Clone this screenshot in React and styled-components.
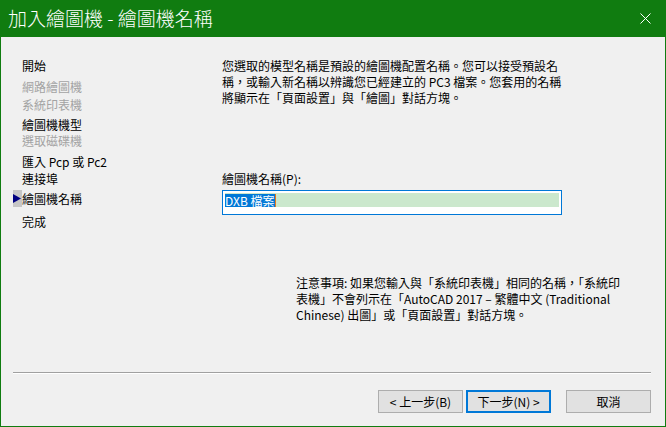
import styled, { createGlobalStyle } from 'styled-components'

const Global = createGlobalStyle`
  html, body {
    margin: 0;
    padding: 0;
    background: #f0f0f0;
  }
  * { box-sizing: border-box; }
`

const Window = styled.div`
  display: flex;
  flex-direction: column;
  inline-size: 666px;
  block-size: 427px;
  border: 1px solid #107c10;
  border-top: none;
  background: #f0f0f0;
  font-family: "Noto Sans CJK TC", "Noto Sans", sans-serif;
  font-size: 12px;
  color: #000;
`

const TitleBar = styled.div`
  display: flex;
  align-items: center;
  block-size: 37px;
  margin: 0 -1px;
  padding-left: 8px;
  background: #107c10;
  color: #fff;

  .title {
    flex: 1;
    font-size: 19px;
    line-height: 24px;
    font-weight: 300;
    padding-bottom: 2px;
  }
`

const CloseButton = styled.div`
  display: flex;
  align-items: center;
  justify-content: center;
  inline-size: 42px;
  block-size: 37px;
`

const Main = styled.div`
  display: flex;
  flex: 1;
  padding-top: 21px;
`

const Sidebar = styled.ul`
  list-style: none;
  margin: 0;
  padding: 0 0 0 21px;
  inline-size: 221px;
  display: flex;
  flex-direction: column;
`

const Step = styled.li`
  position: relative;
  line-height: 16px;
  margin-top: ${p => p.$gap || 0}px;
  color: ${p => (p.$disabled ? '#a3a3a3' : '#000')};
  white-space: nowrap;
`

const Marker = styled.span`
  position: absolute;
  left: -9px;
  top: -1px;
  inline-size: 9px;
  block-size: 17px;
  background: #c6c6c6;
  display: flex;
  align-items: center;
`

const Content = styled.div`
  display: flex;
  flex-direction: column;
  inline-size: 360px;
`

const Intro = styled.p`
  margin: 0;
  line-height: 16px;
  white-space: nowrap;
`

const FieldLabel = styled.label`
  display: block;
  margin-top: 65px;
  line-height: 16px;
`

const NameInput = styled.div`
  margin-top: 3px;
  inline-size: 340px;
  block-size: 25px;
  border: 1px solid #0078d7;
  background: #fff;
  padding: 2px 2px 0 2px;

  .row {
    display: flex;
    align-items: center;
    block-size: 14px;
    background: #cbe8cd;
  }

  .selected {
    background: #0078d7;
    color: #fff;
    line-height: 13px;
    padding-right: 1px;
    border-right: 1px solid #e87a1b;
  }
`

const Note = styled.p`
  margin: 60px 0 0 74px;
  line-height: 16px;
  white-space: nowrap;
`

const Footer = styled.div`
  display: flex;
  flex-direction: column;
  padding: 0 14px 13px 12px;
`

const Separator = styled.hr`
  margin: 0;
  border: none;
  border-top: 1px solid #a0a0a0;
  border-bottom: 1px solid #fff;
`

const ButtonRow = styled.div`
  display: flex;
  justify-content: flex-end;
  margin-top: 16px;
`

const Button = styled.button`
  inline-size: 85px;
  block-size: 23px;
  margin-left: ${p => p.$gap || 0}px;
  padding: 0;
  font: inherit;
  font-size: 12px;
  color: #000;
  background: #e1e1e1;
  border: ${p => (p.$default ? '2px solid #0078d7' : '1px solid #adadad')};
`

function Arrow() {
  return (
    <svg width="9" height="9" viewBox="0 0 9 9">
      <polygon points="0,0 8,4.5 0,9" fill="#000080" />
    </svg>
  )
}

const steps = [
  { text: '開始', gap: 0 },
  { text: '網路繪圖機', gap: 5, disabled: true },
  { text: '系統印表機', gap: 2, disabled: true },
  { text: '繪圖機機型', gap: 4 },
  { text: '選取磁碟機', gap: 0, disabled: true },
  { text: '匯入 Pcp 或 Pc2', gap: 5 },
  { text: '連接埠', gap: 1 },
  { text: '繪圖機名稱', gap: 4, current: true },
  { text: '完成', gap: 7 },
]

export default function App() {
  return (
    <>
      <Global />
      <Window>
        <TitleBar>
          <span className="title">加入繪圖機 - 繪圖機名稱</span>
          <CloseButton>
            <svg width="11" height="11" viewBox="0 0 11 11">
              <path d="M0.5 0.5 L10.5 10.5 M10.5 0.5 L0.5 10.5" stroke="#fff" strokeWidth="1" />
            </svg>
          </CloseButton>
        </TitleBar>
        <Main>
          <Sidebar>
            {steps.map(s => (
              <Step key={s.text} $gap={s.gap} $disabled={s.disabled}>
                {s.current ? (
                  <Marker>
                    <Arrow />
                  </Marker>
                ) : null}
                {s.text}
              </Step>
            ))}
          </Sidebar>
          <Content>
            <Intro>
              您選取的模型名稱是預設的繪圖機配置名稱。您可以接受預設名
              <br />
              稱，或輸入新名稱以辨識您已經建立的 PC3 檔案。您套用的名稱
              <br />
              將顯示在「頁面設置」與「繪圖」對話方塊。
            </Intro>
            <FieldLabel>繪圖機名稱(P):</FieldLabel>
            <NameInput>
              <div className="row">
                <span className="selected">DXB 檔案</span>
              </div>
            </NameInput>
            <Note>
              注意事項: 如果您輸入與「系統印表機」相同的名稱，「系統印
              <br />
              表機」不會列示在「AutoCAD 2017 – 繁體中文 (Traditional
              <br />
              Chinese) 出圖」或「頁面設置」對話方塊。
            </Note>
          </Content>
        </Main>
        <Footer>
          <Separator />
          <ButtonRow>
            <Button>&lt; 上一步(B)</Button>
            <Button $gap={3} $default>下一步(N) &gt;</Button>
            <Button $gap={15}>取消</Button>
          </ButtonRow>
        </Footer>
      </Window>
    </>
  )
}
